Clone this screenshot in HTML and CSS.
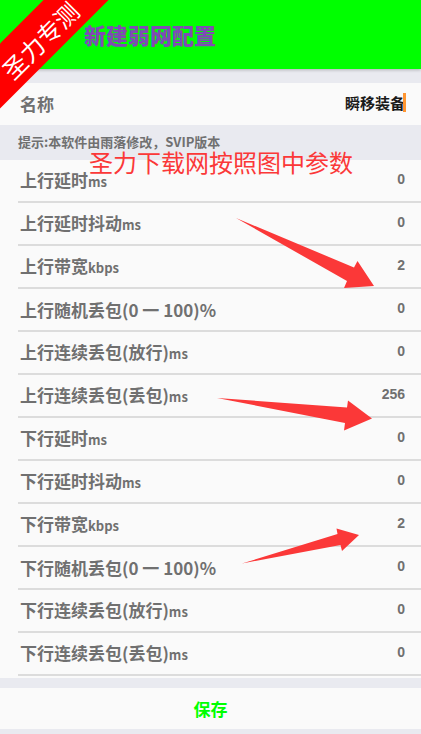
FILE: index.html
```html
<!DOCTYPE html>
<html lang="zh-CN">
<head>
<meta charset="utf-8">
<meta name="viewport" content="width=device-width, initial-scale=1">
<title>新建弱网配置</title>
<link rel="stylesheet" href="styles.css">
</head>

<body>

<header class="topbar">
	<h1>新建弱网配置</h1>
</header>
<div class="ribbon">圣力专测</div>

<form class="config">
	<div class="row name">
		<label for="name">名称</label>
		<input type="text" id="name" value="瞬移装备">
		<span class="caret"></span>
	</div>

	<p class="hint">提示:本软件由雨落修改，SVIP版本</p>

	<div class="list">
		<div class="row"><label for="up_delay">上行延时<span class="unit">ms</span></label><input type="text" id="up_delay" value="0"></div>
		<div class="row"><label for="up_jitter">上行延时抖动<span class="unit">ms</span></label><input type="text" id="up_jitter" value="0"></div>
		<div class="row"><label for="up_band">上行带宽<span class="unit">kbps</span></label><input type="text" id="up_band" value="2"></div>
		<div class="row"><label for="up_loss">上行随机丢包(0 一 100)%</label><input type="text" id="up_loss" value="0"></div>
		<div class="row"><label for="up_pass">上行连续丢包(放行)<span class="unit">ms</span></label><input type="text" id="up_pass" value="0"></div>
		<div class="row"><label for="up_drop">上行连续丢包(丢包)<span class="unit">ms</span></label><input type="text" id="up_drop" value="256"></div>
		<div class="row"><label for="down_delay">下行延时<span class="unit">ms</span></label><input type="text" id="down_delay" value="0"></div>
		<div class="row"><label for="down_jitter">下行延时抖动<span class="unit">ms</span></label><input type="text" id="down_jitter" value="0"></div>
		<div class="row"><label for="down_band">下行带宽<span class="unit">kbps</span></label><input type="text" id="down_band" value="2"></div>
		<div class="row"><label for="down_loss">下行随机丢包(0 一 100)%</label><input type="text" id="down_loss" value="0"></div>
		<div class="row"><label for="down_pass">下行连续丢包(放行)<span class="unit">ms</span></label><input type="text" id="down_pass" value="0"></div>
		<div class="row"><label for="down_drop">下行连续丢包(丢包)<span class="unit">ms</span></label><input type="text" id="down_drop" value="0"></div>

		<div class="note">圣力下载网按照图中参数</div>
		<svg class="arrows" width="160" height="360" viewBox="215 210 160 360" aria-hidden="true">
			<path d="M236 218 L354 267.5 L357.5 261 L374 286 L344 288 L347 281 Z"/>
			<path d="M217 398 L347 407.5 L348 400.5 L372 418.5 L344 430.5 L345 423 Z"/>
			<path d="M242 563.5 L337.5 534 L336.5 528.5 L359 535 L342 551 L340.5 545 Z"/>
		</svg>
	</div>

	<button type="button" class="save">保存</button>
</form>

</body>
</html>
```

FILE: styles.css
```css
* {
	box-sizing: border-box;
}
body {
	margin: 0;
	background-color: #e9eaf0;
	color: #707070;
	font-family: "Liberation Sans", "Noto Sans CJK SC", sans-serif;
	font-weight: bold;
}
.topbar {
	display: flex;
	align-items: center;
	height: 69px;
	padding: 0 84px 2px;
	background-color: #00ff00;
	box-shadow: 0 1px 3px rgba(0, 0, 0, 0.25);
}
.topbar h1 {
	margin: 0;
	color: #7f4bb5;
	font-size: 22px;
	font-weight: 900;
	white-space: nowrap;
}
.ribbon {
	position: absolute;
	z-index: 1;
	top: 15px;
	left: -42px;
	width: 160px;
	height: 46px;
	padding-top: 6px;
	background-color: #ff0000;
	color: #ffffff;
	font-size: 24px;
	font-weight: normal;
	line-height: 44px;
	text-align: center;
	transform: rotate(-45deg);
}
.config {
	margin-top: 14px;
}
.row {
	display: flex;
	align-items: center;
	height: 43px;
	margin-left: 18px;
	padding: 0 16px 0 2px;
	border-bottom: 2px solid #dcdcdc;
}
.row label {
	flex: none;
	font-family: "Noto Sans CJK SC", sans-serif;
	font-size: 17px;
	line-height: 24px;
	white-space: pre;
}
.row input {
	flex: 1;
	min-width: 0;
	padding: 0 0 4px;
	border: 0;
	outline: 0;
	background: none;
	color: inherit;
	font: inherit;
	font-size: 14px;
	text-align: right;
}
.unit {
	font-size: 13px;
}
.name {
	position: relative;
	height: 42px;
	margin: 0;
	padding-left: 20px;
	border: 0;
	background-color: #fafafa;
}
.name input {
	color: #1a1a1a;
	font-size: 15px;
}
.caret {
	position: absolute;
	top: 10px;
	right: 15px;
	width: 3px;
	height: 19px;
	background-color: #ff9632;
}
.hint {
	margin: 0;
	padding: 0 18px 2px;
	font-family: "Noto Sans CJK SC", sans-serif;
	font-size: 13px;
	line-height: 33px;
}
.list {
	position: relative;
	padding-bottom: 2px;
	background-color: #fafafa;
}

/* red marks drawn over the list */
.note {
	position: absolute;
	top: -14px;
	left: 89px;
	color: #fb3838;
	font-size: 24px;
	font-weight: normal;
	line-height: 36px;
	white-space: nowrap;
}
.arrows {
	position: absolute;
	top: 50px;
	left: 215px;
	fill: #fb3838;
	pointer-events: none;
}
.save {
	display: block;
	width: 100%;
	height: 41px;
	margin: 10px 0 5px;
	padding: 0;
	border: 0;
	background-color: #fafafa;
	color: #00ff00;
	font: inherit;
	font-size: 17px;
}
```
